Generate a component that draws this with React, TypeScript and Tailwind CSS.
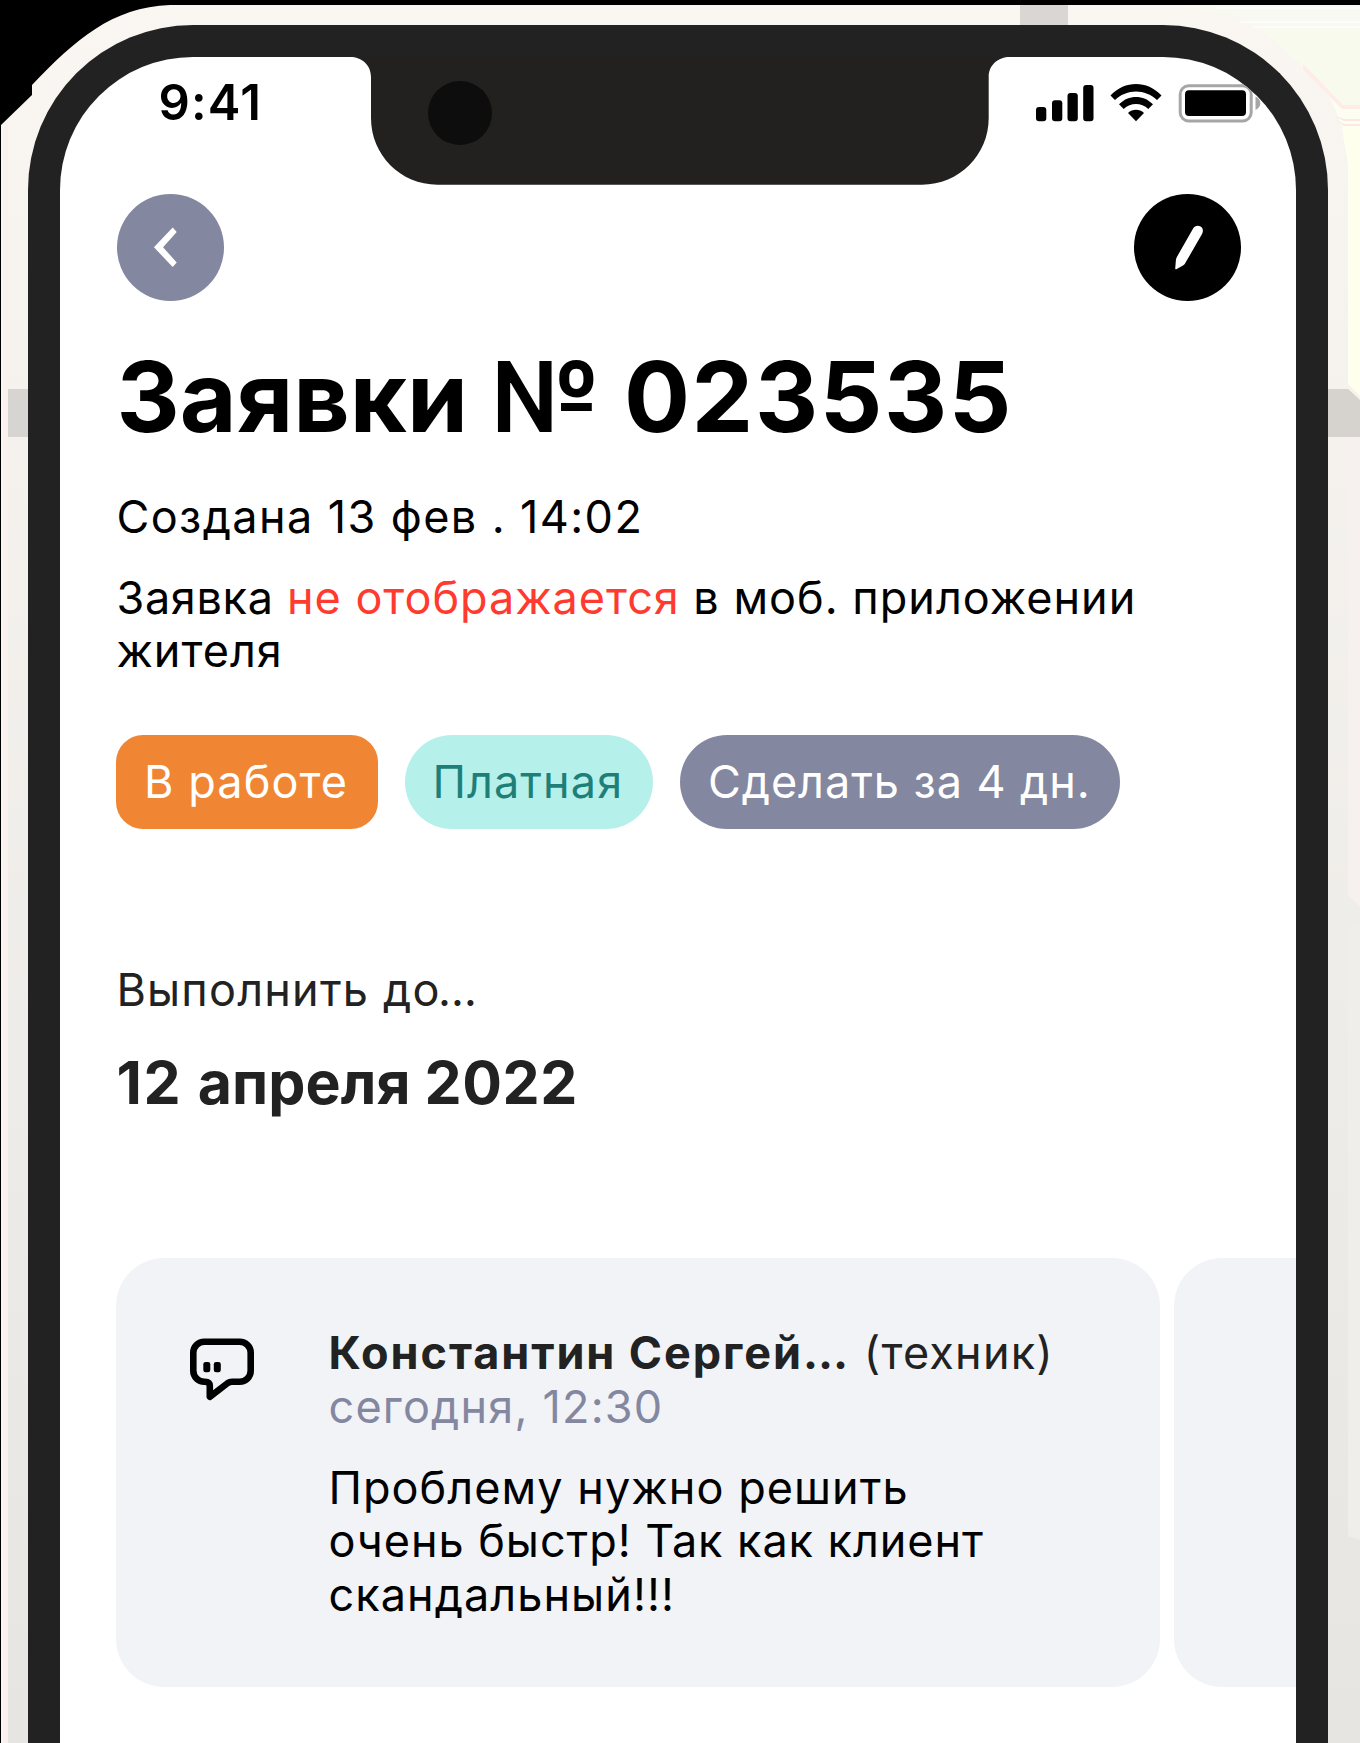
import type { ReactNode } from 'react'

function Backdrop() {
  return (
    <svg className="absolute inset-0" width="1360" height="1743" viewBox="0 0 1360 1743" aria-hidden="true">
      <defs>
        <linearGradient id="wall" x1="0" y1="0" x2="0" y2="1">
          <stop offset="0" stopColor="#faf6f1" />
          <stop offset="0.25" stopColor="#f5f2ee" />
          <stop offset="0.6" stopColor="#eeece8" />
          <stop offset="1" stopColor="#e6e5e1" />
        </linearGradient>
      </defs>
      <rect width="1360" height="1743" fill="url(#wall)" />
      <rect x="1" y="120" width="7" height="1623" fill="#f9f4ef" />
      <rect x="4" y="120" width="4" height="1623" fill="#f8f1ed" />
      <rect x="8" y="389" width="20" height="48" fill="#d7d5d1" />
      <rect x="1020" y="5" width="48" height="20" fill="#d9d6d3" />
      <path d="M1180 5H1360V395L1348 384V170C1348 150 1342 132 1334 104C1310 70 1275 36 1235 16Z" fill="#f9faee" />
      <path d="M1200 5H1360V29H1262C1245 18 1225 9 1200 5Z" fill="#f8f9f3" />
      <path d="M1215 8H1360M1240 22H1360M1252 27H1360" stroke="#fdfdfb" strokeWidth="1.5" />
      <path d="M1303 64L1343 105H1360V109H1342L1303 69Z" fill="#ffebe8" />
      <path d="M1330 98L1342 109H1360V127H1343Z" fill="#fdfef2" />
      <path d="M1334 116L1344 119H1360V121H1344ZM1336 120L1344 126H1360V124H1344Z" fill="#fbe8e4" />
      <path d="M1343 127H1360V396L1348 384V170C1348 155 1343 145 1343 127Z" fill="#feffed" />
      <path d="M1328 389H1348L1360 400V437H1328Z" fill="#d6d3cf" />
      <path d="M1348 437H1360V907L1348 895Z" fill="#f6f1ee" />
      <path d="M1348 925H1360V1540L1348 1536Z" fill="#efeeea" />
      <path d="M0 0H1360V5H170C112 7 75 40 32 85V95L1 125V1743H0Z" fill="#000" />
    </svg>
  )
}

function Notch() {
  return (
    <svg className="absolute left-[288px] top-0" width="664" height="128" viewBox="0 0 664 128" aria-hidden="true">
      <path
        d="M0 0H662C650 0 640.700 8 640.700 20V61C640.700 98 611 127.700 574 127.700H89.500C52.500 127.700 23 98 23 61V20C23 8 14 0 2 0Z"
        fill="#22211f"
      />
      <circle cx="112" cy="56" r="32" fill="#0d0d0d" />
    </svg>
  )
}

function StatusIcons() {
  return (
    <svg className="mt-[25px]" width="226" height="44" viewBox="1035 82 226 44" aria-hidden="true">
      <rect x="1036" y="107" width="10.300" height="14.300" rx="3" />
      <rect x="1052" y="100.300" width="10.300" height="21" rx="3" />
      <rect x="1067.500" y="93" width="10.300" height="28.300" rx="3" />
      <rect x="1083.200" y="85" width="10.300" height="36.300" rx="3" />
      <path d="M1110.500 95.500C1125 80.300 1147 80.300 1161.500 95.500L1157 100C1145 88.500 1127 88.500 1115 100Z" />
      <path d="M1119 104.300C1128.500 94.500 1143.500 94.500 1153 104.300L1148.300 109C1141.300 102.300 1130.700 102.300 1123.700 109Z" />
      <path d="M1128 113C1132.500 108.800 1139.500 108.800 1144 113L1136 121.300Z" />
      <rect x="1180.200" y="85.700" width="71" height="35.300" rx="8.500" fill="none" stroke="#a6a6a6" strokeWidth="3" />
      <rect x="1185" y="90.300" width="61" height="25.700" rx="4" />
      <path d="M1255.500 96.500C1258.500 98 1260.300 100 1260.300 103.300S1258.500 108.500 1255.500 110Z" fill="#a6a6a6" />
    </svg>
  )
}

function BackIcon() {
  return (
    <svg width="107" height="107" viewBox="0 0 108 108" aria-hidden="true">
      <path d="M56.200 33.800L60.300 38.300L46.500 53.700L60.300 69.200L56.200 73.800L37.300 53.700Z" fill="#fff" />
    </svg>
  )
}

function PencilIcon() {
  return (
    <svg width="107" height="107" viewBox="0 0 108 108" aria-hidden="true">
      <path
        d="M59.800 34.500C61.200 32.200 64.500 31.300 67.200 32.800S70 37.800 68.800 40.200L51.500 70.200C50.800 71.400 50.200 71.700 49 72.300L42.700 75.900C42 76.300 41.600 76 41.600 75.300L42.300 66.500C42.400 65.300 42.700 64.500 43.300 63.500Z"
        fill="#fff"
      />
    </svg>
  )
}

function MessageIcon() {
  return (
    <svg className="mt-[80px] shrink-0" width="66" height="66" viewBox="189 1338 66 66" aria-hidden="true">
      <path
        d="M204.500 1341.700H239.500A11 11 0 0 1 250.700 1352.700V1370.700A11 11 0 0 1 239.500 1381.700H232C230.300 1381.700 229.200 1382 227.800 1383L209.800 1396.800V1386C209.800 1383 208 1381.700 205 1381.700H204.500A11 11 0 0 1 193.300 1370.700V1352.700A11 11 0 0 1 204.500 1341.700Z"
        fill="none"
        stroke="#000"
        strokeWidth="6.600"
        strokeLinejoin="round"
      />
      <rect x="203.300" y="1362" width="7" height="10.300" rx="2.300" />
      <rect x="213.800" y="1362" width="7" height="10.300" rx="2.300" />
    </svg>
  )
}

function Tag({ className, children }: { className: string; children: ReactNode }) {
  return <span className={`flex h-[94px] items-center whitespace-nowrap pt-px ${className}`}>{children}</span>
}

export default function App() {
  return (
    <div className="relative h-[1743px] w-[1360px] overflow-hidden bg-[#f5f2ee] pl-[28px] pt-[25px] font-['Inter',sans-serif] text-[45px] leading-[53.7px] text-black">
      <Backdrop />
      <div className="relative h-[1718px] w-[1300px] overflow-hidden rounded-t-[165px] border-[32px] border-b-0 border-[#222222] bg-white">
        <div className="flex h-[136.500px] justify-between pl-[98.500px] pr-[35px]">
          <span className="mt-[16px] text-[49px] font-semibold leading-[60px] tracking-[1.200px]">9:41</span>
          <StatusIcons />
        </div>
        <Notch />

        <header className="flex justify-between pl-[56.500px] pr-[55px]">
          <button className="size-[107.300px] rounded-full bg-[#8487a0]" aria-label="Назад">
            <BackIcon />
          </button>
          <button className="size-[107.300px] rounded-full bg-black" aria-label="Изменить">
            <PencilIcon />
          </button>
        </header>

        <main className="pl-[56.400px]">
          <h1 className="mt-[40px] whitespace-nowrap text-[98px] font-bold leading-[112px] tracking-[0.690px]">
            <span className="tracking-[0.050px]">Заявки </span>№ <span className="tracking-[1.550px]">023535</span>
          </h1>
          <p className="mt-[37.200px] tracking-[1.400px]">Создана 13 фев . 14:02</p>
          <p className="mt-[27px] whitespace-nowrap tracking-[1px]">
            <span className="tracking-[0.700px]">Заявка </span>
            <span className="tracking-[0.950px] text-[#ff3b30]">не отображается</span> в моб. приложении
            <br />
            жителя
          </p>

          <div className="mt-[56.500px] flex gap-[27px] tracking-[1.100px]">
            <Tag className="w-[261.500px] rounded-[27px] bg-[#f08634] pl-[27.500px] text-white">В работе</Tag>
            <Tag className="w-[248px] rounded-full bg-[#b5f0eb] pl-[27.500px] text-[#1e7f79]">Платная</Tag>
            <Tag className="w-[440px] rounded-full bg-[#8487a0] pl-[28px] tracking-[0.950px] text-white">
              Сделать за 4 дн.
            </Tag>
          </div>

          <p className="mt-[134.500px] tracking-[1.200px] text-[#222222]">
            Выполнить до<span className="-ml-[2.500px]">…</span>
          </p>
          <p className="mt-[30px] text-[59px] font-bold leading-[72px] tracking-[0.500px] text-[#222222]">
            <span className="tracking-[1.600px]">12 </span>
            <span className="tracking-[0.050px]">апреля </span>2022
          </p>

          <div className="mt-[139.500px] flex gap-[14px]">
            <article className="flex h-[429px] w-[1043.500px] shrink-0 rounded-[48px] bg-[#f1f3f7] pl-[72.500px]">
              <MessageIcon />
              <div className="ml-[73.600px] mt-[68px] whitespace-nowrap">
                <p className="text-[#222222]">
                  <span className="font-bold tracking-[1.930px]">Константин Сергей…</span>
                  <span className="tracking-[1.200px]"> (техник)</span>
                </p>
                <p className="tracking-[1.200px] text-[#8487a0]">сегодня, 12:30</p>
                <p className="mt-[26.800px] tracking-[1.050px]">
                  Проблему нужно решить
                  <br />
                  <span className="tracking-[0.950px]">очень быстр! Так как клиент</span>
                  <br />
                  скандальный!!!
                </p>
              </div>
            </article>
            <article className="h-[429px] w-[400px] shrink-0 rounded-[48px] bg-[#f1f3f7]" />
          </div>
        </main>
      </div>
    </div>
  )
}
